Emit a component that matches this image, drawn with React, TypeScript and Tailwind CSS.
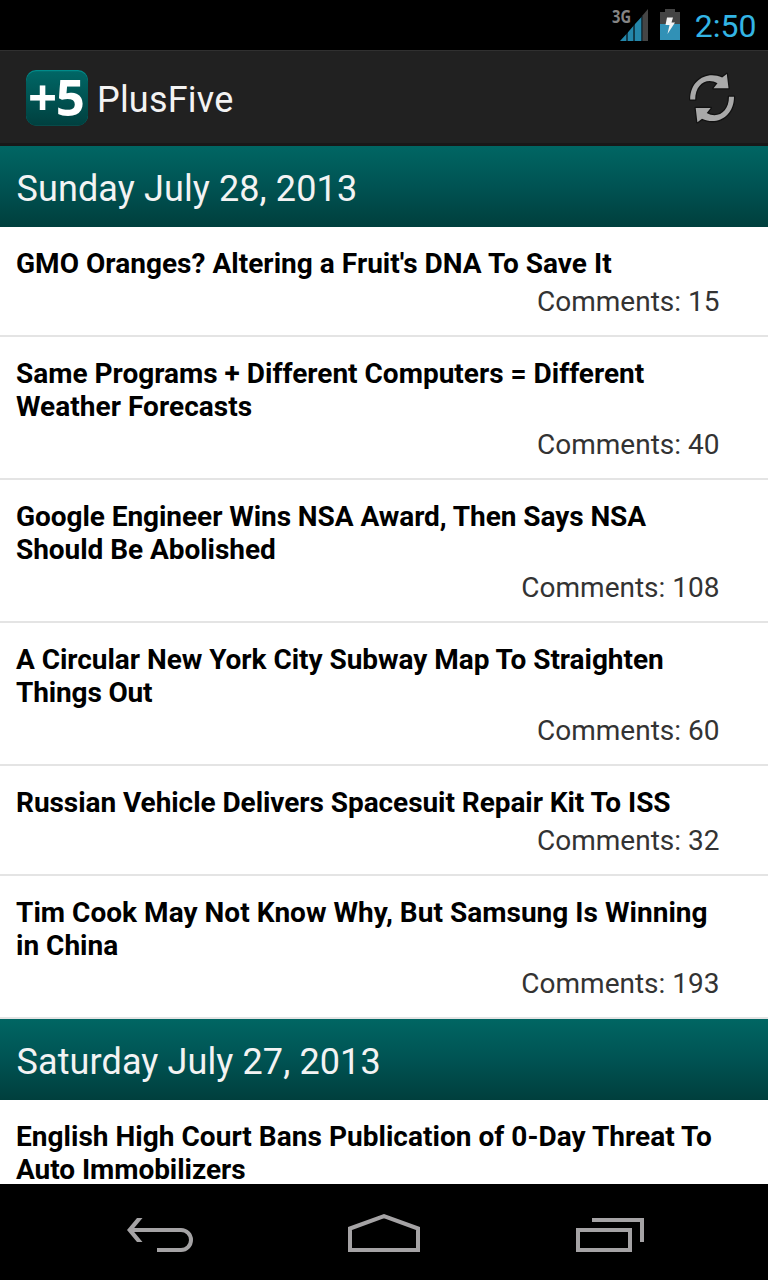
type Line = { text: string; tracking?: string };
type Story = { lines: Line[]; comments: number };

const SUNDAY: Story[] = [
  { lines: [{ text: "GMO Oranges? Altering a Fruit's DNA To Save It", tracking: "tracking-[0.03px]" }], comments: 15 },
  { lines: [{ text: "Same Programs + Different Computers = Different" }, { text: "Weather Forecasts", tracking: "tracking-[0.04px]" }], comments: 40 },
  { lines: [{ text: "Google Engineer Wins NSA Award, Then Says NSA", tracking: "tracking-[-0.06px]" }, { text: "Should Be Abolished", tracking: "tracking-[-0.05px]" }], comments: 108 },
  { lines: [{ text: "A Circular New York City Subway Map To Straighten", tracking: "tracking-[-0.04px]" }, { text: "Things Out", tracking: "tracking-[-0.15px]" }], comments: 60 },
  { lines: [{ text: "Russian Vehicle Delivers Spacesuit Repair Kit To ISS", tracking: "tracking-[-0.06px]" }], comments: 32 },
  { lines: [{ text: "Tim Cook May Not Know Why, But Samsung Is Winning", tracking: "tracking-[0.03px]" }, { text: "in China" }], comments: 193 },
];

const SATURDAY: Story[] = [
  { lines: [{ text: "English High Court Bans Publication of 0-Day Threat To", tracking: "tracking-[0.03px]" }, { text: "Auto Immobilizers", tracking: "tracking-[-0.06px]" }], comments: 57 },
];

function StatusBar() {
  return (
    <div className="flex h-[50px] shrink-0 items-center justify-end bg-black pr-[11.5px]">
      <svg width="70" height="50" viewBox="0 0 70 50" className="mr-[12.5px]">
        <text x="0" y="23" fontSize="17.5" fontWeight="700" fill="#858585" textLength="19" lengthAdjust="spacingAndGlyphs" fontFamily="Open Sans, sans-serif">3G</text>
        <path d="M8 41 L14 34.5 V41Z M16 41 V32.2 L21.5 25.8 V41Z M23 41 V24 L29 17.5 V41Z" fill="#2487ab" />
        <path d="M14 34.5 L16 32.2 V41 H14Z M21.5 25.8 L23 24 V41 H21.5Z M29 17.5 L30.5 15.5 V41 H29Z" fill="#103b4b" />
        <path d="M30.5 15.5 L36 9 V41 H30.5Z" fill="#454545" />
        <path d="M53 9 H63 V12 H68 V24 H48 V12 H53Z" fill="#444" />
        <rect x="48" y="24" width="20" height="16" fill="#3191b6" />
        <path d="M55 17.5 H61 L59.5 22.5 H63 L55.5 34 L57.5 25 H53.5Z" fill="#f4f4f4" />
      </svg>
      <span className="pt-px text-[32px] leading-none text-[#33b5e5]">2:50</span>
    </div>
  );
}

function ActionBar() {
  return (
    <div className="flex h-24 shrink-0 items-center border-t border-b-[3px] border-t-[#303030] border-b-[#181818] bg-[#212121] pt-[2px] pl-[26px] pr-8">
      <svg width="63" height="56" viewBox="0 0 63 56" className="overflow-visible">
        <defs>
          <linearGradient id="logo" x1="0" y1="0" x2="0" y2="1">
            <stop offset="0" stopColor="#006665" />
            <stop offset="1" stopColor="#00403f" />
          </linearGradient>
        </defs>
        <rect x="0" y="0" width="62" height="55.5" rx="10" fill="#008b8a" />
        <rect x="0" y="1.3" width="62" height="54.2" rx="10" fill="url(#logo)" />
        <text fill="#fff" fontSize="51" fontWeight="700" fontFamily="Open Sans, sans-serif">
          <tspan x="2" y="46">+</tspan>
          <tspan x="29.7" y="46.3">5</tspan>
        </text>
      </svg>
      <h1 className="ml-2 pt-1 text-[36px] leading-none tracking-[0.2px] text-[#f3f3f3]">PlusFive</h1>
      <svg width="48" height="54" viewBox="688.5 71.5 48 54" className="ml-auto" fill="none">
        <g stroke="#111" strokeWidth="2.5" strokeLinejoin="round" fill="#a9a9a9" paintOrder="stroke">
          <path d="M690.7 100 C690.7 80 708 71 722.7 78 L727.3 74.4 L729 88.8 H714 L718 83.8 C707 77.5 695.7 85 695.7 100Z" />
          <path d="M690.7 100 C690.7 80 708 71 722.7 78 L727.3 74.4 L729 88.8 H714 L718 83.8 C707 77.5 695.7 85 695.7 100Z" transform="rotate(180 712.6 98.6)" />
        </g>
      </svg>
    </div>
  );
}

function DayHeader({ children }: { children: string }) {
  return (
    <h2 className="flex h-[81px] shrink-0 items-center bg-linear-to-b from-[#006663] via-[#005353] to-[#003f3d] px-[16.5px] pt-1 text-[36px] leading-none tracking-[0.11px] text-[#f3f3f3]">
      {children}
    </h2>
  );
}

function StoryRow({ story }: { story: Story }) {
  return (
    <li className="flex shrink-0 flex-col border-b-2 border-[#e4e4e4] bg-white pt-5 pb-[17px] pl-4">
      {story.lines.map((line) => (
        <span key={line.text} className={`h-[33px] self-start whitespace-nowrap text-[28px] leading-[33px] font-bold text-black ${line.tracking ?? ""}`}>
          {line.text}
        </span>
      ))}
      <span className="mt-[5px] h-[33px] pr-[48.5px] text-right text-[28px] leading-[33px] text-[#333]">
        Comments: {story.comments}
      </span>
    </li>
  );
}

function NavBar() {
  return (
    <nav className="flex h-24 shrink-0 items-center bg-black pl-[110px] text-[#a5a3a5]">
      <svg width="100" height="96" viewBox="110 1184 100 96" fill="none" stroke="currentColor" strokeWidth="4">
        <path d="M130 1230 H181 A10 10 0 0 1 181 1250 H157" />
        <path d="M137 1218 H142.5 L132.5 1230 L142.5 1242 H137 L127 1230Z" fill="currentColor" stroke="none" />
      </svg>
      <svg className="ml-[124px]" width="100" height="96" viewBox="334 1184 100 96" fill="none" stroke="currentColor" strokeWidth="4">
        <path d="M350 1250 V1228.5 L384 1216.2 L418 1228.5 V1250Z" />
      </svg>
      <svg className="ml-[126px]" width="100" height="96" viewBox="560 1184 100 96" fill="none" stroke="currentColor" strokeWidth="4">
        <path d="M578 1230 H630 V1250 H578Z M592 1220 H642 V1242" />
      </svg>
    </nav>
  );
}

export default function App() {
  return (
    <div className="flex h-[1280px] w-[768px] flex-col overflow-hidden bg-black font-[Roboto,sans-serif]">
      <StatusBar />
      <ActionBar />
      <main className="flex min-h-0 flex-1 flex-col overflow-hidden bg-white">
        <DayHeader>Sunday July 28, 2013</DayHeader>
        <ul className="shrink-0">
          {SUNDAY.map((s) => <StoryRow key={s.comments} story={s} />)}
        </ul>
        <DayHeader>Saturday July 27, 2013</DayHeader>
        <ul className="shrink-0">
          {SATURDAY.map((s) => <StoryRow key={s.comments} story={s} />)}
        </ul>
      </main>
      <NavBar />
    </div>
  );
}
